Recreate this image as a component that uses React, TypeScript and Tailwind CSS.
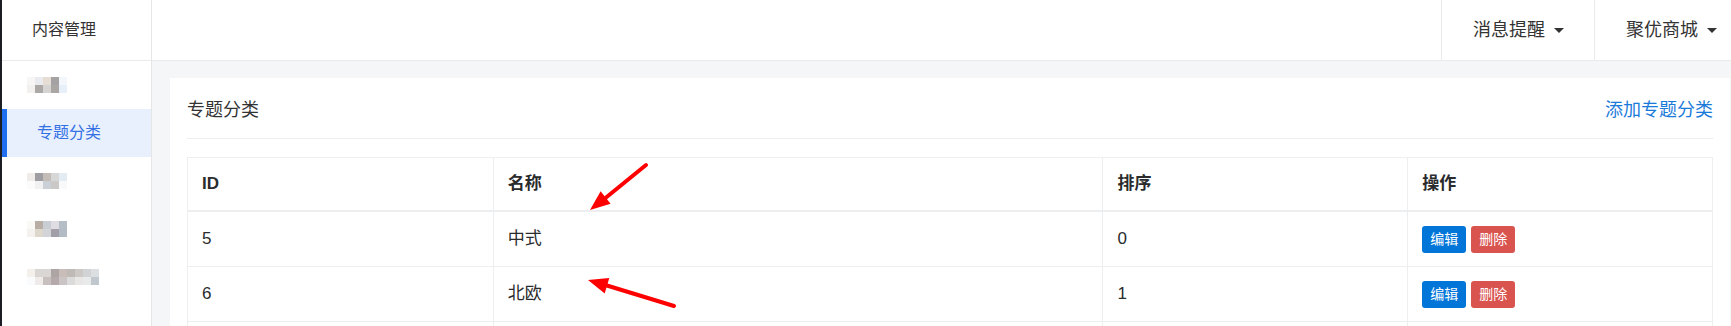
import React from 'react'

type Cell = string

const mosaics: { left: string; rows: Cell[][] }[] = [
  {
    left: 'pl-[25px]',
    rows: [
      ['bg-[#f8f6f4]', 'bg-[#e9ebee]', 'bg-[#e6ddd4]', 'bg-[#a5a2a3]', 'bg-[#f3f6fa]'],
      ['bg-[#f3f1ef]', 'bg-[#aba8a6]', 'bg-[#d5d4d3]', 'bg-[#aaa6a3]', 'bg-[#e7f0f8]'],
    ],
  },
  {
    left: 'pl-[25px]',
    rows: [
      ['bg-[#efecea]', 'bg-[#9e9da1]', 'bg-[#c4bcb6]', 'bg-[#d8d7d8]', 'bg-[#e4ecf3]'],
      ['bg-[#fbfbfb]', 'bg-[#f1f1f1]', 'bg-[#cbd0d6]', 'bg-[#cbc9c7]', 'bg-[#f7f9fb]'],
    ],
  },
  {
    left: 'pl-[25px]',
    rows: [
      ['bg-[#fbf9f6]', 'bg-[#b9aea5]', 'bg-[#c8ced4]', 'bg-[#dfdce2]', 'bg-[#b5bdc6]'],
      ['bg-[#f4f1ee]', 'bg-[#ded7cc]', 'bg-[#d3d4d8]', 'bg-[#a29fa8]', 'bg-[#b3bbc4]'],
    ],
  },
  {
    left: 'pl-[25px]',
    rows: [
      ['bg-[#f4f0ec]', 'bg-[#d9d6d4]', 'bg-[#d9d6d4]', 'bg-[#aca5a4]', 'bg-[#c9bdba]', 'bg-[#c0bab6]', 'bg-[#cbc8c5]', 'bg-[#d2d3d4]', 'bg-[#dcdfe2]'],
      ['bg-[#fafbfd]', 'bg-[#efebeb]', 'bg-[#c8bfbf]', 'bg-[#b5a9ab]', 'bg-[#cbc4c4]', 'bg-[#dbdbdb]', 'bg-[#e8e7e5]', 'bg-[#e9eaea]', 'bg-[#c0c7cd]'],
    ],
  },
]

function Mosaic({ rows }: { rows: Cell[][] }) {
  return (
    <div className="flex flex-col blur-[0.4px]">
      {rows.map((row, i) => (
        <div key={i} className="flex">
          {row.map((c, j) => (
            <div key={j} className={`w-2 h-2 ${c}`} />
          ))}
        </div>
      ))}
    </div>
  )
}

const rows = [
  { id: 5, name: '中式', sort: 0 },
  { id: 6, name: '北欧', sort: 1 },
  { id: 7, name: '', sort: '' },
]

function Caret() {
  return <span className="inline-block w-0 h-0 border-t-[5px] border-t-[#333] border-x-[5px] border-x-transparent" />
}

export default function App() {
  return (
    <div className="h-screen w-full overflow-hidden bg-white font-['Liberation_Sans','Noto_Sans_CJK_SC',sans-serif] text-[#292b2c]">
      <div className="relative flex w-[1747px] min-h-full">
        {/* sidebar */}
        <aside className="w-[152px] shrink-0 border-l-2 border-l-[#1c1c24] border-r border-r-[#e6e6e6] bg-white">
          <div className="h-[61px] border-b border-[#ebebeb] flex items-center pl-[30px] text-[16px] leading-6 text-[#333]">
            内容管理
          </div>
          <div className="h-[48px] flex items-center pl-[25px]">
            <Mosaic rows={mosaics[0].rows} />
          </div>
          <div className="h-[48px] flex items-center pl-[30px] border-l-[5px] border-[#1f6ff0] bg-[#e8f0fe] text-[16px] leading-6 text-[#3470e4]">
            专题分类
          </div>
          {mosaics.slice(1).map((m, i) => (
            <div key={i} className={`h-[48px] flex items-center ${m.left}`}>
              <Mosaic rows={m.rows} />
            </div>
          ))}
        </aside>

        {/* right */}
        <div className="flex-1 flex flex-col">
          <header className="h-[61px] border-b border-[#ebebeb] flex justify-end bg-white">
            <div className="flex items-center gap-[9px] pl-[31px] pr-[30px] border-l border-[#ebebeb] text-[18px] leading-6 text-[#333]">
              消息提醒 <Caret />
            </div>
            <div className="flex items-center gap-[9px] pl-[31px] pr-[30px] border-l border-[#ebebeb] text-[18px] leading-6 text-[#333]">
              聚优商城 <Caret />
            </div>
          </header>

          <main className="flex-1 bg-[#f5f6f8] pt-[17px] pl-[18px] pr-[17px]">
            <div className="bg-white px-[17px] pt-[17px] pb-6">
              <div className="h-[44px] pb-[14px] border-b border-[#eceeef] flex items-center justify-between">
                <h1 className="text-[18px] leading-6 text-[#333] font-normal">专题分类</h1>
                <a href="#" className="text-[18px] leading-6 text-[#1a7ad9]">添加专题分类</a>
              </div>

              <div className="mt-[18px] border border-[#eceeef] text-[17px] leading-6">
                <div className="grid grid-cols-[1fr_2fr_1fr_1fr] h-[54px] border-b-2 border-[#eceeef] font-bold">
                  <div className="flex items-center px-[14px]">ID</div>
                  <div className="flex items-center px-[14px] border-l border-[#eceeef]">名称</div>
                  <div className="flex items-center px-[14px] border-l border-[#eceeef]">排序</div>
                  <div className="flex items-center px-[14px] border-l border-[#eceeef]">操作</div>
                </div>
                {rows.map((r) => (
                  <div key={r.id} className="grid grid-cols-[1fr_2fr_1fr_1fr] h-[55px] border-b border-[#eceeef]">
                    <div className="flex items-center px-[14px]">{r.name ? r.id : ''}</div>
                    <div className="flex items-center px-[14px] border-l border-[#eceeef]">{r.name}</div>
                    <div className="flex items-center px-[14px] border-l border-[#eceeef]">{r.sort}</div>
                    <div className="flex items-center gap-[5px] px-[14px] border-l border-[#eceeef]">
                      {r.name && (
                        <>
                          <button className="h-[27px] px-2 rounded-[3px] bg-[#0275d8] text-white text-[14px] leading-none">编辑</button>
                          <button className="h-[27px] px-2 rounded-[3px] bg-[#d9534f] text-white text-[14px] leading-none">删除</button>
                        </>
                      )}
                    </div>
                  </div>
                ))}
              </div>
            </div>
          </main>
        </div>

        {/* annotation arrows */}
        <svg className="absolute inset-0 pointer-events-none" width="1747" height="400" viewBox="0 0 1747 400">
          <line x1="646" y1="165" x2="603" y2="200" stroke="#ff0000" strokeWidth="4" strokeLinecap="round" />
          <polygon points="590,210 600.6,191.3 610.6,203.7" fill="#ff0000" />
          <line x1="674" y1="306" x2="602" y2="284" stroke="#ff0000" strokeWidth="4" strokeLinecap="round" />
          <polygon points="588,280 609.3,278.1 604.7,293.5" fill="#ff0000" />
        </svg>
      </div>
    </div>
  )
}
